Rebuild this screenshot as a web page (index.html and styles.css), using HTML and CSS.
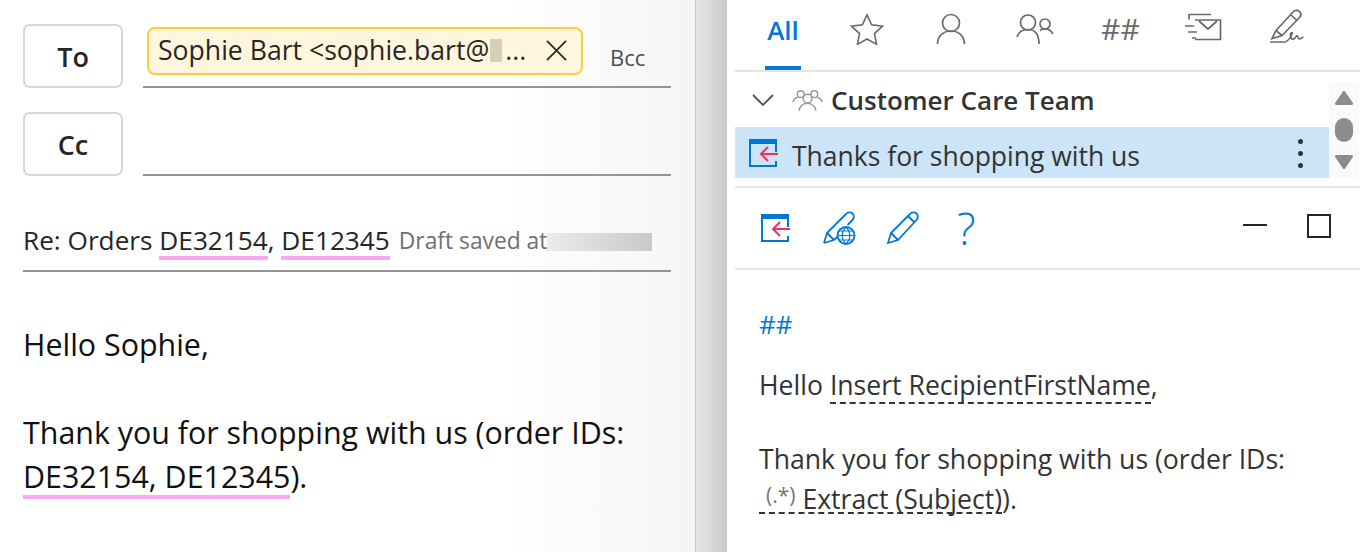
FILE: index.html
```html
<!DOCTYPE html>
<html lang="en">
<head>
<meta charset="utf-8">
<title>Compose with templates</title>
<link rel="stylesheet" href="styles.css">
</head>
<body>
<div class="app">
  <main class="compose">
    <div class="addr-row">
      <button class="addr-btn">To</button>
      <div class="addr-field">
        <div class="chip">
          <span class="chip-text">Sophie Bart &lt;sophie.bart@<span class="chip-redact"></span>...</span>
          <svg class="chip-x" viewBox="0 0 22 22"><path d="M1 1l20 20M21 1L1 21"/></svg>
        </div>
        <span class="bcc">Bcc</span>
      </div>
    </div>
    <div class="addr-row cc-row">
      <button class="addr-btn">Cc</button>
      <div class="addr-field"></div>
    </div>
    <div class="subject">
      <span>Re: Orders <span class="mark">DE32154</span>, <span class="mark">DE12345</span></span>
      <span class="draft">Draft saved at</span><span class="redact"></span>
    </div>
    <div class="mail-body">
      <p class="hello">Hello Sophie,</p>
      <p>Thank you for shopping with us (order IDs:<br><span class="mark-b">DE32154, DE12345</span>).</p>
    </div>
  </main>
  <div class="splitter"></div>
  <aside class="side">
    <nav class="tabs">
      <span class="tab-all">All</span>
      <svg class="t t-star" viewBox="0 0 36 34"><path d="M18 2l4.900 10.600 11.600 1.400-8.600 7.900 2.300 11.400L18 27.600 7.800 33.300l2.300-11.400L1.500 14l11.600-1.400z"/></svg>
      <svg class="t t-user" viewBox="0 0 30 32"><circle cx="15" cy="10" r="8.500"/><path d="M1.500 31c0-7.500 5.500-13 13.500-13s13.500 5.500 13.500 13"/></svg>
      <svg class="t t-users" viewBox="0 0 38 32"><circle cx="12" cy="9.500" r="7.500"/><circle cx="29" cy="11" r="5"/><path d="M1 24c1.500-5 5.500-7.500 11-7.500 6.500 0 11 4.500 11 14.500"/><path d="M24 17.500c1.500-1 3-1.500 5-1.500 4 0 6.500 2 8 5"/></svg>
      <span class="t-hash">##</span>
      <svg class="t t-mail" viewBox="0 0 38 28"><path d="M4 6.500v-5h22"/><path d="M10 7h25.500v19.500H10M14 8l9 8 9-8"/><path d="M0 13h9M3 19h9M7 25h4"/></svg>
      <svg class="t t-sign" viewBox="0 0 36 36"><path d="M7 21.500L24 3c2-2 5-2 6.500-.5s2 4 0 6L13 26.500l-10 3z"/><path d="M7 21.500l6 5M22 6l6.500 6"/><path d="M1 33h15c3-1 6-5 7-8 1-2-1-2-1.500 0-.5 3 1 6 3 5s3-4 4-3 .5 3 2 3 3-2 4-2"/></svg>
    </nav>
    <div class="tree">
      <div class="tree-lines">
        <div class="group">
          <svg class="chev" viewBox="0 0 22 12"><path d="M1 1l10 10L21 1"/></svg>
          <svg class="group-ico" viewBox="0 0 32 24"><circle cx="9" cy="6" r="3.500"/><circle cx="23" cy="6" r="3.500"/><circle cx="16" cy="10.500" r="4.500"/><path d="M1 14c1-3 3-4.500 5-4.500M31 14c-1-3-3-4.500-5-4.500M7.500 23c0-4 3.500-7.500 8.500-7.500s8.500 3.500 8.500 7.500"/></svg>
          <span class="group-name">Customer Care Team</span>
        </div>
        <div class="item">
          <svg class="tpl" viewBox="0 0 28 28"><path class="tpl-top" d="M0 0h28v5H0z"/><path class="tpl-frame" d="M1 5v22h26v-5M27 13V5"/><path class="tpl-arrow" d="M30 15H13M20 8l-7 7 7 7" transform="translate(-1 0)"/></svg>
          <span class="item-name">Thanks for shopping with us</span>
          <span class="dots"><i></i><i></i><i></i></span>
        </div>
      </div>
      <div class="scroll">
        <svg class="sc-a" viewBox="0 0 18 14"><path d="M9 1.500l7.500 11h-15z"/></svg>
        <span class="sc-thumb"></span>
        <svg class="sc-a" viewBox="0 0 18 14"><path d="M1.500 1.500h15L9 12.500z"/></svg>
      </div>
    </div>
    <div class="toolbar">
      <svg class="tpl tb-1" viewBox="0 0 28 28"><path class="tpl-top" d="M0 0h28v5H0z"/><path class="tpl-frame" d="M1 5v22h26v-5M27 13V5"/><path class="tpl-arrow" d="M30 15H13M20 8l-7 7 7 7" transform="translate(-1 0)"/></svg>
      <svg class="tb tb-2" viewBox="0 0 34 34"><path d="M2 32l3-10L24 3c2-2 5-2 6.500-.5s2 4.500 0 6.500l-5 5M2 32l10-3M5 22l7 7M12 29l3-3"/><circle cx="24" cy="24.500" r="8.500"/><path class="thin" d="M15.500 24.500h17M24 16c-5 5-5 12 0 17M24 16c5 5 5 12 0 17M17 20h14M17 29h14"/></svg>
      <svg class="tb tb-3" viewBox="0 0 34 34"><path d="M2 32l3-10L24 3c2-2 5-2 6.500-.5s2 4.500 0 6.500L12 29zM5 22l7 7M22 5l7 7"/></svg>
      <span class="help">?</span>
      <span class="min"></span>
      <span class="max"></span>
    </div>
    <div class="preview">
      <p class="pv-hash">##</p>
      <p class="pv-hello">Hello <span class="dash">Insert RecipientFirstName</span>,</p>
      <p class="pv-thanks">Thank you for shopping with us (order IDs:<br><span class="dash"><span class="regex">(.*)</span> Extract (Subject)</span>).</p>
    </div>
  </aside>
</div>
</body>
</html>
```
FILE: styles.css
```css
* { box-sizing: border-box; }
html, body { margin: 0; height: 100%; overflow: hidden; background: #fff; }
body { font-family: "Open Sans", "Noto Sans", sans-serif; color: #262626; }
p { margin: 0; }
svg { display: block; fill: none; }

.app { display: flex; width: 1360px; height: 552px; }

.compose {
  width: 695px;
  flex: none;
  padding: 24px 24px 0 23px;
  background: linear-gradient(90deg, #fff 0, #fff 500px, #f5f5f5 100%);
}
.addr-row { display: flex; gap: 20px; height: 64px; }
.cc-row { margin-top: 24px; }
.addr-btn {
  width: 100px; height: 64px; padding: 0;
  border: 2px solid #d6d6d6; border-radius: 7px; background: #fff;
  font: 600 27px/1 "Open Sans", sans-serif; color: #262626;
}
.addr-field {
  flex: 1; display: flex; align-items: flex-start;
  border-bottom: 2px solid #949494;
}
.chip {
  margin: 3px 0 0 4px; width: 436px; height: 48px;
  display: flex; align-items: center; justify-content: space-between;
  padding: 0 14px 2px 9px;
  background: #fff6dd; border: 2px solid #fdcd3c; border-radius: 8px;
  font-size: 26.600px; white-space: nowrap;
}
.chip-text { display: flex; align-items: center; white-space: pre; }
.chip-redact { display: inline-block; width: 12px; height: 23px; background: #d6d0b9; margin: 0 3px 0 1px; }
.chip-x { width: 21px; height: 21px; stroke: #262626; stroke-width: 1.800; }
.bcc { margin: 18px 0 0 27px; font-size: 22px; color: #4d4d4d; }

.subject {
  margin-top: 40px; height: 56px; width: 648px;
  border-bottom: 2px solid #949494;
  display: flex; align-items: flex-start; padding-top: 7px;
  font-size: 26.200px; line-height: 34px; white-space: pre;
}
.mark { border-bottom: 4px solid #faa5f5; display: inline-block; line-height: 31px; height: 35px; }
.draft { margin-left: 9px; margin-top: 1px; font-size: 22.800px; color: #707070; }
.redact {
  width: 105px; height: 18px; margin-top: 10px;
  background: linear-gradient(90deg, #ebebeb, #c9c9c9);
}

.mail-body { margin-top: 51px; font: 30.400px/44px "Open Sans", sans-serif; color: #111; }
.hello { margin-bottom: 44px; }
.mark-b { border-bottom: 4px solid #faa5f5; display: inline-block; height: 44px; }

.splitter {
  width: 32px; flex: none;
  background: linear-gradient(90deg, #e2e2e2, #dcdcdc 40%, #c8c8c8);
  border-left: 1px solid #c9c9c9;
}

.side { flex: 1; padding-left: 8px; display: flex; flex-direction: column; min-width: 0; }

.tabs { height: 72px; border-bottom: 2px solid #e4e4e4; position: relative; display: flex; align-items: flex-start; }
.tab-all {
  margin-left: 30px; width: 36px; height: 70px; padding-top: 11px;
  border-bottom: 4px solid #0078d4;
  font: 600 26px/38px "Open Sans", sans-serif; color: #0078d4; text-align: center;
}
.t { stroke: #6a6a6a; stroke-width: 1.700; flex: none; margin-top: 13px; }
.t-star { width: 34px; height: 32px; margin-left: 49px; }
.t-user { width: 30px; height: 32px; margin-left: 52px; }
.t-users { width: 38px; height: 32px; margin-left: 50px; }
.t-hash { margin-left: 47px; width: 36px; font-size: 30px; line-height: 34px; margin-top: 12px; color: #6a6a6a; }
.t-mail { width: 38px; height: 28px; margin-left: 48px; margin-top: 13px; }
.t-sign { width: 36px; height: 36px; margin-left: 46px; margin-top: 9px; }

.tree { height: 106px; display: flex; }
.tree-lines { width: 594px; flex: none; }
.group { height: 55px; display: flex; align-items: center; padding-left: 17px; }
.chev { width: 22px; height: 12px; stroke: #555; stroke-width: 1.800; }
.group-ico { width: 31px; height: 24px; margin-left: 18px; stroke: #999; stroke-width: 1.500; }
.group-name { margin-left: 8px; font-size: 26px; font-weight: 600; color: #333; white-space: nowrap; }
.item { height: 51px; background: #cce4f7; display: flex; align-items: center; padding-left: 14px; position: relative; }
.item-name { margin-left: 15px; padding-top: 7px; font-size: 26.500px; white-space: nowrap; color: #333; }
.dots { position: absolute; left: 563px; top: 12px; display: flex; flex-direction: column; gap: 7px; }
.dots i { width: 5px; height: 5px; border-radius: 50%; background: #333; display: block; }
.tpl { width: 28px; height: 28px; flex: none; overflow: visible; }
.tpl-top { fill: #0078d4; }
.tpl-frame { stroke: #0078d4; stroke-width: 2; }
.tpl-arrow { stroke: #f0325a; stroke-width: 2; }

.scroll {
  width: 30px; margin-top: 10px; height: 96px; background: #fafafa;
  display: flex; flex-direction: column; align-items: center; padding-top: 9px;
}
.sc-a { width: 18px; height: 14px; fill: #8c8c8c; stroke: #8c8c8c; stroke-width: 3; stroke-linejoin: round; }
.sc-thumb { width: 18px; height: 24px; border-radius: 9px; background: #8c8c8c; margin: 13px 0 13px; }

.toolbar {
  margin-top: 8px; height: 84px; flex: none;
  border-top: 2px solid #e4e4e4; border-bottom: 2px solid #e4e4e4;
  display: flex; align-items: center; padding-left: 26px; position: relative;
}
.tb { width: 34px; height: 34px; flex: none; stroke: #0078d4; stroke-width: 1.800; }
.tb .thin { stroke-width: 1.200; }
.tb-2 { margin-left: 33px; }
.tb-3 { margin-left: 30px; }
.help { margin-left: 37px; font-size: 44px; line-height: 40px; color: #0078d4; font-weight: 300; }
.min { position: absolute; left: 508px; top: 36px; width: 24px; height: 2px; background: #262626; }
.max { position: absolute; left: 572px; top: 26px; width: 24px; height: 24px; border: 2px solid #262626; }

.preview { padding: 36px 0 0 24px; font-size: 26.600px; color: #333; }
.pv-hash { color: #0078d4; font-size: 26px; line-height: 36px; }
.pv-hello { margin-top: 25px; line-height: 37px; }
.pv-thanks { margin-top: 37px; line-height: 37px; }
.dash { border-bottom: 2px dashed #333; display: inline-block; line-height: 34px; height: 36px; }
.regex { font-size: 21px; color: #777; vertical-align: 6px; margin-left: 7px; }
```
